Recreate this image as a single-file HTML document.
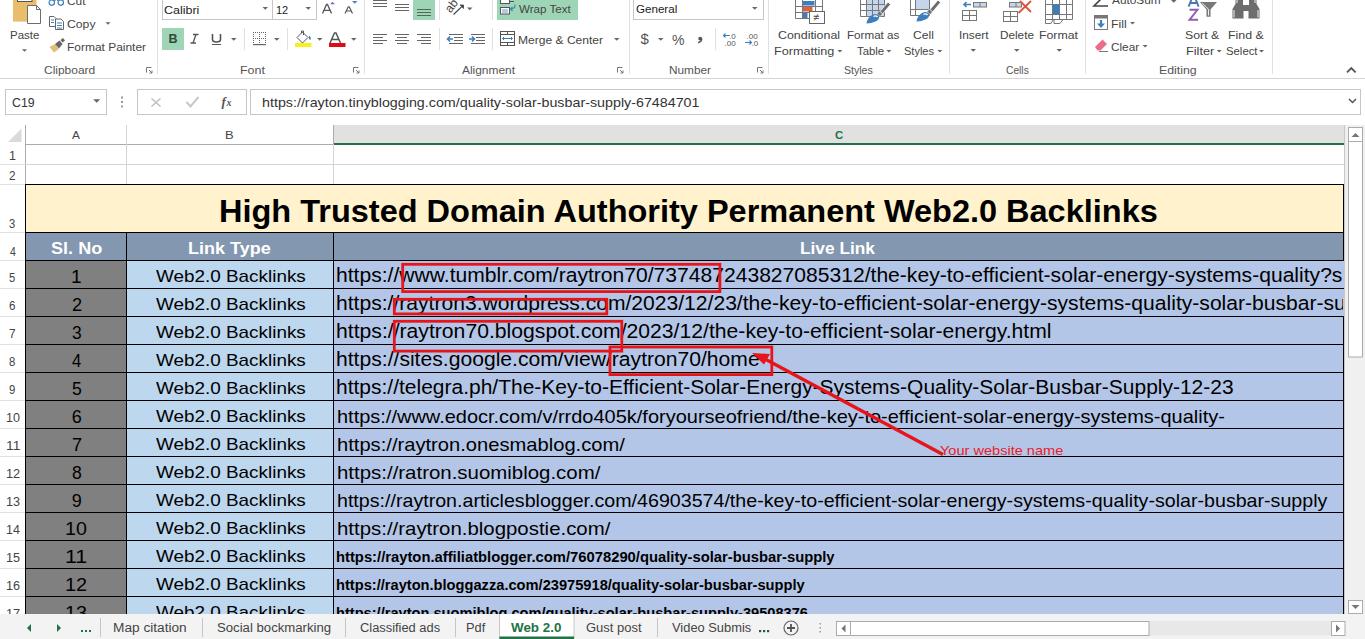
<!DOCTYPE html>
<html><head><meta charset="utf-8">
<style>
html,body{margin:0;padding:0;width:1365px;height:639px;overflow:hidden;background:#fff;font-family:"Liberation Sans",sans-serif;}
.t{position:absolute;white-space:nowrap;line-height:1;transform-origin:0 0;}
.r{position:absolute;}
#ribbon{position:absolute;left:0;top:0;width:1365px;height:79px;background:#fff;}
.div{position:absolute;top:0;width:1px;height:74px;background:#E1E1E1;}
.box{position:absolute;border:1px solid #C6C6C6;background:#fff;box-sizing:border-box;}
svg{position:absolute;overflow:visible;}
#cells{position:absolute;left:334px;top:260px;width:1009px;height:354px;overflow:hidden;}
</style></head><body>
<div id="ribbon">
  <div class="r" style="left:0;top:78px;width:1365px;height:1px;background:#D5D5D5"></div>
  <div class="div" style="left:157px"></div>
  <div class="div" style="left:364px"></div>
  <div class="div" style="left:629px"></div>
  <div class="div" style="left:768px"></div>
  <div class="div" style="left:949px"></div>
  <div class="div" style="left:1085px"></div>
  <div class="div" style="left:1272px"></div>
  <!-- font boxes -->
  <div class="box" style="left:162px;top:-2px;width:111px;height:22px"></div>
  <div class="box" style="left:272px;top:-2px;width:45px;height:22px"></div>
  <div class="r" style="left:162px;top:28px;width:22px;height:22px;background:#9FD5B7"></div>
  <div class="r" style="left:413px;top:0px;width:22px;height:20px;background:#9FD5B7"></div>
  <div class="r" style="left:497px;top:0px;width:81px;height:20px;background:#9FD5B7"></div>
  <div class="box" style="left:633px;top:-2px;width:131px;height:22px"></div>
<svg style="left:0;top:0" width="1365" height="79" viewBox="0 0 1365 79" shape-rendering="auto">
 <!-- Paste -->
 <rect x="13" y="-2" width="23.5" height="23.6" fill="#EABD6C"/>
 <rect x="17.5" y="-2" width="14.5" height="3.5" fill="#fff" stroke="#555" stroke-width="1"/>
 <path d="M27.5 5.5 H36.5 L40.5 9.5 V23.5 H27.5 Z" fill="#fff" stroke="#6d6d6d" stroke-width="1"/>
 <path d="M36.5 5.5 V9.5 H40.5" fill="none" stroke="#6d6d6d" stroke-width="1"/>
 <path d="M22 49.3 H27 L24.5 51.8 Z" fill="#666"/>
 <!-- Cut scissors -->
 <circle cx="51.8" cy="2.6" r="2.7" fill="none" stroke="#3D7EBF" stroke-width="1.2"/>
 <circle cx="60.8" cy="2.6" r="2.7" fill="none" stroke="#3D7EBF" stroke-width="1.2"/>
 <path d="M54.5 1 L56.3 -1 L58.1 1" fill="none" stroke="#555" stroke-width="1"/>
 <!-- Copy -->
 <path d="M49.5 16.5 H54 L56 18.5 V26.5 H49.5 Z" fill="#fff" stroke="#666" stroke-width="1"/>
 <path d="M51 20 H54 M51 22.5 H54" stroke="#3D7EBF" stroke-width="1"/>
 <path d="M55.5 19 H61 L63.5 21.5 V29.5 H55.5 Z" fill="#fff" stroke="#666" stroke-width="1"/>
 <path d="M57 23 H62 M57 25.5 H62 M57 28 H62" stroke="#3D7EBF" stroke-width="1"/>
 <!-- copy arrow -->
 <path d="M105.5 22.2 H110.5 L108 24.8 Z" fill="#666"/>
 <!-- Format painter -->
 <path d="M49.5 47 L55 44 L59 49 L54 52.5 Z" fill="#E3BE7B"/>
 <path d="M55 44 L59.5 40.5 L62.5 44 L59 48.5 Z" fill="#666"/>
 <path d="M60.5 40 L63 38 L65 40.5 L62.5 42.5 Z" fill="#666"/>
 <!-- dialog launchers -->
 <g stroke="#777" stroke-width="1" fill="none">
  <path d="M146.5 72.5 V67.5 H151.5"/><path d="M149 70 L152 73 M152 70.5 V73 H149.5"/>
  <path d="M353.5 72.5 V67.5 H358.5"/><path d="M356 70 L359 73 M359 70.5 V73 H356.5"/>
  <path d="M617.5 72.5 V67.5 H622.5"/><path d="M620 70 L623 73 M623 70.5 V73 H620.5"/>
  <path d="M757.5 72.5 V67.5 H762.5"/><path d="M760 70 L763 73 M763 70.5 V73 H760.5"/>
 </g>
 <!-- Font dropdown arrows -->
 <path d="M262.5 7 H268 L265.25 9.8 Z" fill="#666"/>
 <path d="M305.5 7 H311 L308.25 9.8 Z" fill="#666"/>
 <!-- grow / shrink font -->
 <path d="M322.5 13.5 L326.5 4.5 H327.5 L331.5 13.5 M324 10.3 H330" fill="none" stroke="#555" stroke-width="1.3"/>
 <path d="M330 4.3 L332.5 1.8 L335 4.3 Z" fill="#5B7FA6"/>
 <path d="M345 13.5 L348.3 6.8 H349.2 L352.5 13.5 M346.3 11 H351.2" fill="none" stroke="#555" stroke-width="1.2"/>
 <path d="M352 1 H357.5 L354.75 3.7 Z" fill="#5B7FA6"/>
 <!-- B I U -->
 <text x="168.6" y="43" font-family="Liberation Sans" font-weight="700" font-size="12.5" fill="#2D4A3B">B</text>
 <path d="M193 34.5 H198.5 M190.5 43 H196 M196 34.5 L193 43" fill="none" stroke="#555" stroke-width="1.3"/>
 <path d="M212.5 34 V39.5 Q212.5 42 216.5 42 Q220.5 42 220.5 39.5 V34" fill="none" stroke="#555" stroke-width="1.6"/>
 <path d="M212 44.5 H221" stroke="#555" stroke-width="1"/>
 <path d="M231 38 H236.5 L233.75 40.8 Z" fill="#666"/>
 <rect x="244" y="28" width="1" height="22" fill="#E1E1E1"/>
 <!-- borders icon -->
 <g fill="#666">
  <path d="M253 32 h1v1h-1z M255 32h1v1h-1z M257 32h1v1h-1z M259 32h1v1h-1z M261 32h1v1h-1z M263 32h1v1h-1z M265 32h1v1h-1z"/>
  <path d="M253 38 h1v1h-1z M255 38h1v1h-1z M257 38h1v1h-1z M259 38h1v1h-1z M261 38h1v1h-1z M263 38h1v1h-1z M265 38h1v1h-1z"/>
  <path d="M253 34h1v1h-1z M253 36h1v1h-1z M253 40h1v1h-1z M253 42h1v1h-1z M265 34h1v1h-1z M265 36h1v1h-1z M265 40h1v1h-1z M265 42h1v1h-1z M259 34h1v1h-1z M259 36h1v1h-1z M259 40h1v1h-1z M259 42h1v1h-1z"/>
  <rect x="253" y="44" width="13" height="1.2"/>
 </g>
 <path d="M274 38 H279.5 L276.75 40.8 Z" fill="#666"/>
 <rect x="287" y="28" width="1" height="22" fill="#E1E1E1"/>
 <!-- fill color -->
 <rect x="295" y="43" width="16.5" height="4" fill="#F5F01E"/>
 <path d="M302.5 32 L308 37.5 L302.5 43 L297 37.5 Z" fill="#fff" stroke="#555" stroke-width="1"/>
 <path d="M301.5 33 V31 H303.5 V35" fill="none" stroke="#555" stroke-width="1"/>
 <path d="M309 35.5 Q311.5 37 310.5 40 L309 39 Z" fill="#3D7EBF"/>
 <path d="M317 38 H322.5 L319.75 40.8 Z" fill="#666"/>
 <!-- font color -->
 <path d="M330 43 L334.5 33 H336 L340.5 43 M332 39.5 H338.5" fill="none" stroke="#555" stroke-width="1.5"/>
 <rect x="329" y="43" width="16.5" height="4" fill="#E00B17"/>
 <path d="M351 38 H356.5 L353.75 40.8 Z" fill="#666"/>
 <!-- alignment -->
 <g stroke="#666" stroke-width="1">
  <path d="M373 0.5 H387 M373 3.5 H387 M373 6.5 H387"/>
  <path d="M395 4.5 H409 M395 7.5 H409 M395 10.5 H409"/>
  <path d="M417 9.5 H431 M417 12.5 H431 M417 15.5 H431" stroke="#4E6B5A"/>
  <path d="M373 34.5 H387 M373 37.5 H383 M373 40.5 H387 M373 43.5 H383"/>
  <path d="M395 34.5 H409 M397 37.5 H407 M395 40.5 H409 M397 43.5 H407"/>
  <path d="M417 34.5 H431 M421 37.5 H431 M417 40.5 H431 M421 43.5 H431"/>
  <path d="M449 34.5 H463 M454 37.5 H463 M454 40.5 H463 M449 43.5 H463"/>
  <path d="M471 34.5 H485 M476 37.5 H485 M476 40.5 H485 M471 43.5 H485"/>
 </g>
 <path d="M453 39 H447.5 M450 36.5 L447.5 39 L450 41.5" fill="none" stroke="#3D7EBF" stroke-width="1.6"/>
 <path d="M469 39 H474.5 M472 36.5 L474.5 39 L472 41.5" fill="none" stroke="#3D7EBF" stroke-width="1.6"/>
 <rect x="439" y="0" width="1" height="20" fill="#E1E1E1"/>
 <rect x="439" y="28" width="1" height="22" fill="#E1E1E1"/>
 <rect x="492" y="0" width="1" height="20" fill="#E1E1E1"/>
 <rect x="492" y="28" width="1" height="22" fill="#E1E1E1"/>
 <!-- orientation -->
 <text transform="translate(450.5,13.5) rotate(-52)" font-family="Liberation Sans" font-size="12" fill="#444">ab</text>
 <path d="M453.5 14.5 L461.5 7" fill="none" stroke="#444" stroke-width="1.1"/><path d="M460 5 L463.5 5 L463.5 8.5 Z" fill="#444" stroke="#444" stroke-width="0.8"/>
 <path d="M467 7.5 H472.5 L469.75 10.3 Z" fill="#666"/>
 <!-- wrap text icon -->
 <rect x="500.5" y="-2" width="9" height="5.5" fill="#fff" stroke="#555" stroke-width="1"/>
 <path d="M509.5 1.5 H514" stroke="#555" stroke-width="1"/>
 <rect x="500.5" y="7.5" width="9" height="6.5" fill="#fff" stroke="#555" stroke-width="1"/>
 <path d="M502 10 H508 M502 12 H508" stroke="#3D7EBF" stroke-width="0.8"/>
 <path d="M515 4.5 Q515.5 9 510.5 9 M512.5 7 L510.5 9 L512.5 11" fill="none" stroke="#3D7EBF" stroke-width="1.1"/>
 <!-- merge icon -->
 <rect x="500.5" y="31.5" width="14" height="14" fill="#fff" stroke="#555" stroke-width="1"/>
 <path d="M500.5 34.5 H514.5 M500.5 42.5 H514.5 M507.5 31.5 V34.5 M507.5 42.5 V45.5" stroke="#555" stroke-width="1"/>
 <path d="M502.5 38.5 H512.5 M504 37 L502.5 38.5 L504 40 M511 37 L512.5 38.5 L511 40" fill="none" stroke="#3D7EBF" stroke-width="1"/>
 <path d="M614 38 H619.5 L616.75 40.8 Z" fill="#666"/>
 <!-- number dropdown -->
 <path d="M752 7 H757.5 L754.75 9.8 Z" fill="#666"/>
 <text x="640.5" y="44" font-family="Liberation Sans" font-size="15" fill="#555">$</text>
 <path d="M658 38 H663.5 L660.75 40.8 Z" fill="#666"/>
 <text x="672" y="44.5" font-family="Liberation Sans" font-size="14" fill="#555">%</text>
 <circle cx="700.2" cy="38.6" r="1.9" fill="#555"/><path d="M701.8 38.8 Q701.8 41.5 698.2 42.8" fill="none" stroke="#555" stroke-width="1.5"/>
 <rect x="715" y="28" width="1" height="22" fill="#E1E1E1"/>
 <text x="729" y="38.5" font-family="Liberation Sans" font-size="8" fill="#555">.0</text>
 <text x="724.5" y="45.5" font-family="Liberation Sans" font-size="8" fill="#555">.00</text>
 <path d="M730 35.5 H723.5 M725.5 33.5 L723.5 35.5 L725.5 37.5" fill="none" stroke="#3D7EBF" stroke-width="1.1"/>
 <text x="746.5" y="38.5" font-family="Liberation Sans" font-size="8" fill="#555">.00</text>
 <text x="751.5" y="45.5" font-family="Liberation Sans" font-size="8" fill="#555">.0</text>
 <path d="M745 42.5 H751.5 M749.5 40.5 L751.5 42.5 L749.5 44.5" fill="none" stroke="#3D7EBF" stroke-width="1.1"/>
 <!-- conditional formatting -->
 <g stroke="#777" stroke-width="1" fill="none">
  <path d="M795.5 -1 V18.5 H822.5 V-1 M795.5 6.5 H822.5 M795.5 12.5 H809 M802.5 -1 V18.5 M815.5 -1 V11"/>
 </g>
 <rect x="803" y="1" width="11.5" height="4.5" fill="#3D7EBF"/>
 <rect x="803" y="7" width="9.5" height="4.5" fill="#E0623A"/>
 <rect x="803" y="13" width="4.5" height="5" fill="#3D7EBF"/>
 <rect x="809.5" y="11.5" width="15" height="12" fill="#fff" stroke="#666" stroke-width="1"/>
 <text x="813" y="21" font-family="Liberation Sans" font-size="11" fill="#444">≠</text>
 <!-- format as table -->
 <rect x="866" y="-1" width="18.5" height="17" fill="#C5D6EA"/>
 <g stroke="#777" stroke-width="1" fill="none">
  <path d="M860.5 -1 V16.5 H884.5 V-1 M860.5 4.5 H884.5 M860.5 10.5 H884.5 M866.5 -1 V16.5 M872.5 -1 V16.5 M878.5 -1 V16.5"/>
 </g>
 <path d="M880 11.5 L888 2 L890.5 4.5 L882.5 14 Z" fill="#6d6d6d" stroke="#fff" stroke-width="0.8"/>
 <path d="M877 13.5 L879.5 11 L882.5 14 L880 16.5 Z" fill="#6d6d6d" stroke="#fff" stroke-width="0.6"/>
 <path d="M866.5 23.5 Q867.5 17 873 14.5 Q877 13 879 15.5 Q880 19.5 875.5 21.5 Q871.5 23.3 866.5 23.5 Z" fill="#3D7EBF"/>
 <path d="M873.5 16.5 Q876 15 877.5 17" stroke="#fff" stroke-width="1.3" fill="none"/>
 <!-- cell styles -->
 <rect x="915" y="-1" width="14.5" height="10.5" fill="#C5D6EA"/>
 <g stroke="#777" stroke-width="1" fill="none">
  <path d="M910.5 -1 V15.5 H929.5 V-1 M910.5 9.5 H929.5 M915.5 -1 V15.5"/>
 </g>
 <path d="M930 9.5 L938 0 L940.5 2.5 L932.5 12 Z" fill="#6d6d6d" stroke="#fff" stroke-width="0.8"/>
 <path d="M927 11.5 L929.5 9 L932.5 12 L930 14.5 Z" fill="#6d6d6d" stroke="#fff" stroke-width="0.6"/>
 <path d="M916.5 21.5 Q917.5 15 923 12.5 Q927 11 929 13.5 Q930 17.5 925.5 19.5 Q921.5 21.3 916.5 21.5 Z" fill="#3D7EBF"/>
 <path d="M923.5 14.5 Q926 13 927.5 15" stroke="#fff" stroke-width="1.3" fill="none"/>
 <!-- styles arrows -->
 <path d="M837.4 50 H842.4 L839.9 52.6 Z" fill="#666"/>
 <path d="M886.4 50 H891.4 L888.9 52.6 Z" fill="#666"/>
 <path d="M937.3 50 H942.3 L939.8 52.6 Z" fill="#666"/>
 <!-- insert -->
 <g stroke="#777" stroke-width="1" fill="none">
  <rect x="962.5" y="10.5" width="14" height="10"/><path d="M969.5 10.5 V20.5 M962.5 15.5 H976.5"/>
  <rect x="973.5" y="2.5" width="13" height="4.5" fill="#C5D6EA"/><path d="M980 2.5 V7"/>
  <rect x="1003.5" y="11.5" width="14" height="10"/><path d="M1010.5 11.5 V21.5 M1003.5 16.5 H1017.5"/>
  <rect x="1009.5" y="2.5" width="12" height="4.5" fill="#C5D6EA"/><path d="M1016 2.5 V7"/>
 </g>
 <path d="M971 4.5 H964 M966.5 2 L964 4.5 L966.5 7" fill="none" stroke="#3D7EBF" stroke-width="1.6"/>
 <path d="M1020 1 L1031 12 M1031 1 L1018.5 13" stroke="#E0523A" stroke-width="1.8"/>
 <!-- format cells icon -->
 <g stroke="#777" stroke-width="1" fill="none">
  <path d="M1045.5 -1 V19.5 H1072.5 V-1 M1045.5 4.5 H1072.5 M1045.5 14.5 H1072.5 M1052.5 -1 V19.5 M1059.5 -1 V19.5 M1066.5 -1 V19.5"/>
  <path d="M1045.5 19.5 V23.5 H1051 L1053 20 M1054 20 V23.5 H1060 L1063 19.5"/>
 </g>
 <rect x="1053" y="5" width="6.5" height="9" fill="#3D7EBF"/>
 <path d="M970.5 49 H976 L973.25 51.8 Z" fill="#666"/>
 <path d="M1014 49 H1019.5 L1016.75 51.8 Z" fill="#666"/>
 <path d="M1056.5 49 H1062 L1059.25 51.8 Z" fill="#666"/>
 <!-- editing -->
 <path d="M1108 6 H1094 L1101 -1" fill="none" stroke="#444" stroke-width="1.6"/>
 <path d="M1171 0 H1176.5 L1173.75 2.8 Z" fill="#666"/>
 <rect x="1094.5" y="15.5" width="13" height="14" fill="#fff" stroke="#777" stroke-width="1"/>
 <rect x="1094.5" y="15.5" width="13" height="3" fill="#777"/>
 <path d="M1101 20 V25" fill="none" stroke="#3D7EBF" stroke-width="2.2"/>
 <path d="M1097 23.5 L1101 28 L1105 23.5 Z" fill="#3D7EBF"/>
 <path d="M1130 22 H1135 L1132.5 24.6 Z" fill="#666"/>
 <path d="M1095 47 L1102.5 39.5 L1107 44 L1100.5 50.5 L1097.5 50.5 Z" fill="#E86F87"/>
 <path d="M1099 51.5 H1108" stroke="#777" stroke-width="1"/>
 <path d="M1142.6 45 H1147.6 L1145.1 47.6 Z" fill="#666"/>
 <!-- sort filter -->
 <path d="M1188.6 6.6 L1193.6 -6 L1198.6 6.6 M1190.2 3 H1197" fill="none" stroke="#4A78B0" stroke-width="1.9"/>
 <path d="M1189.5 9.8 H1197.5 L1189.5 19.8 H1198" fill="none" stroke="#8E5FB0" stroke-width="1.9"/>
 <path d="M1200 2 H1217 L1210.5 9.5 V16.8 H1206.5 V9.5 Z" fill="#777"/>
 <path d="M1202.5 3.3 L1208.5 9.3 V15.5" fill="none" stroke="#fff" stroke-width="0.9"/>
 <path d="M1216.7 50 H1221.7 L1219.2 52.6 Z" fill="#666"/>
 <!-- find binoculars -->
 <path d="M1232.5 18.5 V9 L1235.5 4 V-2 H1243 V5 H1249 V-2 H1256.5 V4 L1259.5 9 V18.5 H1248.5 V11 H1243.5 V18.5 Z" fill="#6d6d6d"/>
 <path d="M1234 17.5 V10 M1258 17.5 V10 M1237 3 V-2 M1255 3 V-2" stroke="#fff" stroke-width="0.9"/>
 <path d="M1259 50 H1264 L1261.5 52.6 Z" fill="#666"/>
 <!-- collapse caret -->
 <path d="M1347 72.3 L1351.3 68 L1355.6 72.3" fill="none" stroke="#555" stroke-width="1.9"/>
</svg>

</div>
<!-- formula bar -->
<div class="box" style="left:5px;top:89px;width:102px;height:26px"></div>
<div class="box" style="left:137px;top:89px;width:110px;height:26px"></div>
<div class="box" style="left:250px;top:89px;width:1111px;height:26px"></div>

<!-- headers -->
<div class="r" style="left:334px;top:125px;width:1010px;height:18px;background:#E1E1E1"></div>
<div class="r" style="left:25px;top:144px;width:309px;height:1px;background:#ABABAB"></div>
<div class="r" style="left:334px;top:143px;width:1010px;height:2px;background:#217346"></div>
<div class="r" style="left:25px;top:125px;width:1px;height:489px;background:#ABABAB"></div>
<div class="r" style="left:126px;top:125px;width:1px;height:19px;background:#D4D4D4"></div>
<div class="r" style="left:333px;top:125px;width:1px;height:19px;background:#ABABAB"></div>
<div class="r" style="left:1344px;top:125px;width:1px;height:489px;background:#C6C6C6"></div>

<div class="r" style="left:25px;top:184px;width:1319px;height:48px;background:#FFF2CC"></div>
<div class="r" style="left:25px;top:232px;width:1319px;height:28px;background:#8497B0"></div>
<div class="r" style="left:25px;top:260px;width:101px;height:354px;background:#808080"></div>
<div class="r" style="left:126px;top:260px;width:207px;height:354px;background:#BDD7EE"></div>
<div class="r" style="left:333px;top:260px;width:1011px;height:354px;background:#B4C6E7"></div>
<div class="r" style="left:25px;top:164px;width:1319px;height:1px;background:#D4D4D4"></div>
<div class="r" style="left:126px;top:144px;width:1px;height:40px;background:#D4D4D4"></div>
<div class="r" style="left:333px;top:144px;width:1px;height:40px;background:#D4D4D4"></div>
<div class="r" style="left:25px;top:184px;width:1319px;height:1px;background:#000"></div>
<div class="r" style="left:25px;top:232px;width:1319px;height:1px;background:#000"></div>
<div class="r" style="left:25px;top:260px;width:1319px;height:1px;background:#000"></div>
<div class="r" style="left:25px;top:288px;width:1319px;height:1px;background:#000"></div>
<div class="r" style="left:25px;top:316px;width:1319px;height:1px;background:#000"></div>
<div class="r" style="left:25px;top:344px;width:1319px;height:1px;background:#000"></div>
<div class="r" style="left:25px;top:372px;width:1319px;height:1px;background:#000"></div>
<div class="r" style="left:25px;top:400px;width:1319px;height:1px;background:#000"></div>
<div class="r" style="left:25px;top:428px;width:1319px;height:1px;background:#000"></div>
<div class="r" style="left:25px;top:456px;width:1319px;height:1px;background:#000"></div>
<div class="r" style="left:25px;top:484px;width:1319px;height:1px;background:#000"></div>
<div class="r" style="left:25px;top:512px;width:1319px;height:1px;background:#000"></div>
<div class="r" style="left:25px;top:540px;width:1319px;height:1px;background:#000"></div>
<div class="r" style="left:25px;top:568px;width:1319px;height:1px;background:#000"></div>
<div class="r" style="left:25px;top:596px;width:1319px;height:1px;background:#000"></div>
<div class="r" style="left:25px;top:184px;width:1px;height:430px;background:#000"></div>
<div class="r" style="left:126px;top:232px;width:1px;height:382px;background:#000"></div>
<div class="r" style="left:333px;top:232px;width:1px;height:382px;background:#000"></div>
<div class="r" style="left:1343px;top:184px;width:1px;height:76px;background:#000"></div>
<div class="r" style="left:1343px;top:316px;width:1px;height:298px;background:#000"></div>
<div class="r" style="left:0px;top:164px;width:25px;height:1px;background:#E1E1E1"></div>
<div class="r" style="left:0px;top:184px;width:25px;height:1px;background:#E1E1E1"></div>
<div class="r" style="left:0px;top:232px;width:25px;height:1px;background:#E1E1E1"></div>
<div class="r" style="left:0px;top:260px;width:25px;height:1px;background:#E1E1E1"></div>
<div class="r" style="left:0px;top:288px;width:25px;height:1px;background:#E1E1E1"></div>
<div class="r" style="left:0px;top:316px;width:25px;height:1px;background:#E1E1E1"></div>
<div class="r" style="left:0px;top:344px;width:25px;height:1px;background:#E1E1E1"></div>
<div class="r" style="left:0px;top:372px;width:25px;height:1px;background:#E1E1E1"></div>
<div class="r" style="left:0px;top:400px;width:25px;height:1px;background:#E1E1E1"></div>
<div class="r" style="left:0px;top:428px;width:25px;height:1px;background:#E1E1E1"></div>
<div class="r" style="left:0px;top:456px;width:25px;height:1px;background:#E1E1E1"></div>
<div class="r" style="left:0px;top:484px;width:25px;height:1px;background:#E1E1E1"></div>
<div class="r" style="left:0px;top:512px;width:25px;height:1px;background:#E1E1E1"></div>
<div class="r" style="left:0px;top:540px;width:25px;height:1px;background:#E1E1E1"></div>
<div class="r" style="left:0px;top:568px;width:25px;height:1px;background:#E1E1E1"></div>
<div class="r" style="left:0px;top:596px;width:25px;height:1px;background:#E1E1E1"></div>
<div id="cells">
<div class="t" style="left:2.26px;top:5.05px;font-size:20.5px;font-weight:400;color:#000;transform:scaleX(1.0286)">https://www.tumblr.com/raytron70/737487243827085312/the-key-to-efficient-solar-energy-systems-quality?source=share</div>
<div class="t" style="left:2.26px;top:33.05px;font-size:20.5px;font-weight:400;color:#000;transform:scaleX(1.0286)">https://raytron3.wordpress.com/2023/12/23/the-key-to-efficient-solar-energy-systems-quality-solar-busbar-supply/</div>
<div class="t" style="left:2.25px;top:61.05px;font-size:20.5px;font-weight:400;color:#000;transform:scaleX(1.0323)">https://raytron70.blogspot.com/2023/12/the-key-to-efficient-solar-energy.html</div>
<div class="t" style="left:2.26px;top:89.05px;font-size:20.5px;font-weight:400;color:#000;transform:scaleX(1.0300)">https://sites.google.com/view/raytron70/home</div>
<div class="t" style="left:2.27px;top:117.05px;font-size:20.5px;font-weight:400;color:#000;transform:scaleX(1.0236)">https://telegra.ph/The-Key-to-Efficient-Solar-Energy-Systems-Quality-Solar-Busbar-Supply-12-23</div>
<div class="t" style="left:2.63px;top:146.52px;font-size:19px;font-weight:400;color:#000;transform:scaleX(1.0515)">https://www.edocr.com/v/rrdo405k/foryourseofriend/the-key-to-efficient-solar-energy-systems-quality-</div>
<div class="t" style="left:2.62px;top:174.52px;font-size:19px;font-weight:400;color:#000;transform:scaleX(1.0606)">https://raytron.onesmablog.com/</div>
<div class="t" style="left:2.60px;top:202.52px;font-size:19px;font-weight:400;color:#000;transform:scaleX(1.0750)">https://ratron.suomiblog.com/</div>
<div class="t" style="left:2.66px;top:230.52px;font-size:19px;font-weight:400;color:#000;transform:scaleX(1.0332)">https://raytron.articlesblogger.com/46903574/the-key-to-efficient-solar-energy-systems-quality-solar-busbar-supply</div>
<div class="t" style="left:2.60px;top:258.52px;font-size:19px;font-weight:400;color:#000;transform:scaleX(1.0741)">https://raytron.blogpostie.com/</div>
<div class="t" style="left:1.98px;top:290.23px;font-size:14.5px;font-weight:700;color:#000;transform:scaleX(1.0194)">https://rayton.affiliatblogger.com/76078290/quality-solar-busbar-supply</div>
<div class="t" style="left:1.99px;top:318.23px;font-size:14.5px;font-weight:700;color:#000;transform:scaleX(1.0098)">https://rayton.bloggazza.com/23975918/quality-solar-busbar-supply</div>
<div class="t" style="left:1.99px;top:346.23px;font-size:14.5px;font-weight:700;color:#000;transform:scaleX(1.0082)">https://rayton.suomiblog.com/quality-solar-busbar-supply-39508376</div>
</div>

<div class="t" style="left:67.48px;top:-3.93px;font-size:11.5px;font-weight:400;color:#444;transform:scaleX(1.0344)">Cut</div>
<div class="t" style="left:67.47px;top:18.57px;font-size:11.5px;font-weight:400;color:#444;transform:scaleX(1.0607)">Copy</div>
<div class="t" style="left:67.06px;top:42.07px;font-size:11.5px;font-weight:400;color:#444;transform:scaleX(1.0397)">Format Painter</div>
<div class="t" style="left:10.10px;top:30.07px;font-size:11.5px;font-weight:400;color:#444;transform:scaleX(0.9996)">Paste</div>
<div class="t" style="left:44.48px;top:64.77px;font-size:11.5px;font-weight:400;color:#555;transform:scaleX(1.0411)">Clipboard</div>
<div class="t" style="left:164.46px;top:4.57px;font-size:11.5px;font-weight:400;color:#222;transform:scaleX(1.0850)">Calibri</div>
<div class="t" style="left:276.23px;top:4.57px;font-size:11.5px;font-weight:400;color:#222;transform:scaleX(0.9569)">12</div>
<div class="t" style="left:240.02px;top:64.77px;font-size:11.5px;font-weight:400;color:#555;transform:scaleX(1.0852)">Font</div>
<div class="t" style="left:519.00px;top:4.07px;font-size:11.5px;font-weight:400;color:#444;transform:scaleX(1.0086)">Wrap Text</div>
<div class="t" style="left:518.06px;top:35.07px;font-size:11.5px;font-weight:400;color:#444;transform:scaleX(1.0481)">Merge &amp; Center</div>
<div class="t" style="left:462.00px;top:64.77px;font-size:11.5px;font-weight:400;color:#555;transform:scaleX(1.0363)">Alignment</div>
<div class="t" style="left:635.50px;top:4.07px;font-size:11.5px;font-weight:400;color:#222;transform:scaleX(1.0086)">General</div>
<div class="t" style="left:669.07px;top:64.77px;font-size:11.5px;font-weight:400;color:#555;transform:scaleX(1.0283)">Number</div>
<div class="t" style="left:778.06px;top:29.87px;font-size:11.5px;font-weight:400;color:#444;transform:scaleX(1.0785)">Conditional</div>
<div class="t" style="left:774.41px;top:45.77px;font-size:11.5px;font-weight:400;color:#444;transform:scaleX(1.0962)">Formatting</div>
<div class="t" style="left:846.69px;top:29.87px;font-size:11.5px;font-weight:400;color:#444;transform:scaleX(1.0117)">Format as</div>
<div class="t" style="left:856.70px;top:45.77px;font-size:11.5px;font-weight:400;color:#444;transform:scaleX(0.9889)">Table</div>
<div class="t" style="left:912.77px;top:29.87px;font-size:11.5px;font-weight:400;color:#444;transform:scaleX(1.0509)">Cell</div>
<div class="t" style="left:903.82px;top:45.77px;font-size:11.5px;font-weight:400;color:#444;transform:scaleX(0.9584)">Styles</div>
<div class="t" style="left:843.54px;top:64.77px;font-size:11.5px;font-weight:400;color:#555;transform:scaleX(0.9191)">Styles</div>
<div class="t" style="left:959.47px;top:29.57px;font-size:11.5px;font-weight:400;color:#444;transform:scaleX(1.0264)">Insert</div>
<div class="t" style="left:999.58px;top:29.57px;font-size:11.5px;font-weight:400;color:#444;transform:scaleX(1.0205)">Delete</div>
<div class="t" style="left:1039.04px;top:29.57px;font-size:11.5px;font-weight:400;color:#444;transform:scaleX(1.0697)">Format</div>
<div class="t" style="left:1005.55px;top:64.77px;font-size:11.5px;font-weight:400;color:#555;transform:scaleX(0.8903)">Cells</div>
<div class="t" style="left:1112.00px;top:-4.93px;font-size:11.5px;font-weight:400;color:#444;transform:scaleX(1.0295)">AutoSum</div>
<div class="t" style="left:1111.44px;top:19.07px;font-size:11.5px;font-weight:400;color:#444;transform:scaleX(1.0664)">Fill</div>
<div class="t" style="left:1111.49px;top:42.07px;font-size:11.5px;font-weight:400;color:#444;transform:scaleX(1.0242)">Clear</div>
<div class="t" style="left:1185.46px;top:29.87px;font-size:11.5px;font-weight:400;color:#444;transform:scaleX(1.0708)">Sort &amp;</div>
<div class="t" style="left:1185.51px;top:45.77px;font-size:11.5px;font-weight:400;color:#444;transform:scaleX(1.1050)">Filter</div>
<div class="t" style="left:1227.63px;top:29.87px;font-size:11.5px;font-weight:400;color:#444;transform:scaleX(1.0788)">Find &amp;</div>
<div class="t" style="left:1225.51px;top:45.77px;font-size:11.5px;font-weight:400;color:#444;transform:scaleX(0.9852)">Select</div>
<div class="t" style="left:1159.03px;top:64.77px;font-size:11.5px;font-weight:400;color:#555;transform:scaleX(1.0725)">Editing</div>
<div class="t" style="left:11.88px;top:97.14px;font-size:12px;font-weight:400;color:#333;transform:scaleX(1.0268)">C19</div>
<div class="t" style="left:261.65px;top:95.97px;font-size:13.5px;font-weight:400;color:#333;transform:scaleX(1.0581)">https://rayton.tinyblogging.com/quality-solar-busbar-supply-67484701</div>
<div class="t" style="left:71.50px;top:129.57px;font-size:11.5px;font-weight:400;color:#444;transform:scaleX(1.0390)">A</div>
<div class="t" style="left:224.98px;top:129.57px;font-size:11.5px;font-weight:400;color:#444;transform:scaleX(1.1290)">B</div>
<div class="t" style="left:835.31px;top:129.57px;font-size:11.5px;font-weight:700;color:#217346;transform:scaleX(0.9868)">C</div>
<div class="t" style="left:8.87px;top:150.24px;font-size:12px;font-weight:400;color:#444;transform:scaleX(1.0385)">1</div>
<div class="t" style="left:9.21px;top:170.24px;font-size:12px;font-weight:400;color:#444;transform:scaleX(0.9818)">2</div>
<div class="t" style="left:9.43px;top:218.24px;font-size:12px;font-weight:400;color:#444;transform:scaleX(0.9310)">3</div>
<div class="t" style="left:9.63px;top:246.24px;font-size:12px;font-weight:400;color:#444;transform:scaleX(0.8710)">4</div>
<div class="t" style="left:9.43px;top:272.04px;font-size:12px;font-weight:400;color:#444;transform:scaleX(0.9310)">5</div>
<div class="t" style="left:9.22px;top:300.04px;font-size:12px;font-weight:400;color:#444;transform:scaleX(0.9643)">6</div>
<div class="t" style="left:9.21px;top:328.04px;font-size:12px;font-weight:400;color:#444;transform:scaleX(0.9818)">7</div>
<div class="t" style="left:9.33px;top:356.04px;font-size:12px;font-weight:400;color:#444;transform:scaleX(0.9474)">8</div>
<div class="t" style="left:9.33px;top:384.04px;font-size:12px;font-weight:400;color:#444;transform:scaleX(0.9474)">9</div>
<div class="t" style="left:6.06px;top:412.04px;font-size:12px;font-weight:400;color:#444;transform:scaleX(1.0436)">10</div>
<div class="t" style="left:5.97px;top:440.04px;font-size:12px;font-weight:400;color:#444;transform:scaleX(1.1472)">11</div>
<div class="t" style="left:6.04px;top:468.04px;font-size:12px;font-weight:400;color:#444;transform:scaleX(1.0612)">12</div>
<div class="t" style="left:6.05px;top:496.04px;font-size:12px;font-weight:400;color:#444;transform:scaleX(1.0523)">13</div>
<div class="t" style="left:6.07px;top:524.04px;font-size:12px;font-weight:400;color:#444;transform:scaleX(1.0350)">14</div>
<div class="t" style="left:6.05px;top:552.04px;font-size:12px;font-weight:400;color:#444;transform:scaleX(1.0523)">15</div>
<div class="t" style="left:6.05px;top:580.04px;font-size:12px;font-weight:400;color:#444;transform:scaleX(1.0523)">16</div>
<div class="t" style="left:6.04px;top:608.04px;font-size:12px;font-weight:400;color:#444;transform:scaleX(1.0612)">17</div>
<div class="t" style="left:219.37px;top:194.71px;font-size:32px;font-weight:700;color:#000;transform:scaleX(1.0153)">High Trusted Domain Authority Permanent Web2.0 Backlinks</div>
<div class="t" style="left:51.07px;top:240.41px;font-size:17px;font-weight:700;color:#fff;transform:scaleX(1.0639)">Sl. No</div>
<div class="t" style="left:188.33px;top:240.41px;font-size:17px;font-weight:700;color:#fff;transform:scaleX(1.0598)">Link Type</div>
<div class="t" style="left:800.28px;top:240.41px;font-size:17px;font-weight:700;color:#fff;transform:scaleX(1.0175)">Live Link</div>
<div class="t" style="left:71.22px;top:267.56px;font-size:18px;font-weight:400;color:#000;transform:scaleX(1.0633)">1</div>
<div class="t" style="left:156.20px;top:268.11px;font-size:17px;font-weight:400;color:#000;transform:scaleX(1.1110)">Web2.0 Backlinks</div>
<div class="t" style="left:71.69px;top:295.56px;font-size:18px;font-weight:400;color:#000;transform:scaleX(1.0120)">2</div>
<div class="t" style="left:156.20px;top:296.11px;font-size:17px;font-weight:400;color:#000;transform:scaleX(1.1110)">Web2.0 Backlinks</div>
<div class="t" style="left:72.02px;top:323.56px;font-size:18px;font-weight:400;color:#000;transform:scaleX(0.9655)">3</div>
<div class="t" style="left:156.20px;top:324.11px;font-size:17px;font-weight:400;color:#000;transform:scaleX(1.1110)">Web2.0 Backlinks</div>
<div class="t" style="left:72.23px;top:351.56px;font-size:18px;font-weight:400;color:#000;transform:scaleX(0.9231)">4</div>
<div class="t" style="left:156.20px;top:352.11px;font-size:17px;font-weight:400;color:#000;transform:scaleX(1.1110)">Web2.0 Backlinks</div>
<div class="t" style="left:71.92px;top:379.56px;font-size:18px;font-weight:400;color:#000;transform:scaleX(0.9767)">5</div>
<div class="t" style="left:156.20px;top:380.11px;font-size:17px;font-weight:400;color:#000;transform:scaleX(1.1110)">Web2.0 Backlinks</div>
<div class="t" style="left:71.70px;top:407.56px;font-size:18px;font-weight:400;color:#000;transform:scaleX(1.0000)">6</div>
<div class="t" style="left:156.20px;top:408.11px;font-size:17px;font-weight:400;color:#000;transform:scaleX(1.1110)">Web2.0 Backlinks</div>
<div class="t" style="left:71.69px;top:435.56px;font-size:18px;font-weight:400;color:#000;transform:scaleX(1.0120)">7</div>
<div class="t" style="left:156.20px;top:436.11px;font-size:17px;font-weight:400;color:#000;transform:scaleX(1.1110)">Web2.0 Backlinks</div>
<div class="t" style="left:71.92px;top:463.56px;font-size:18px;font-weight:400;color:#000;transform:scaleX(0.9767)">8</div>
<div class="t" style="left:156.20px;top:464.11px;font-size:17px;font-weight:400;color:#000;transform:scaleX(1.1110)">Web2.0 Backlinks</div>
<div class="t" style="left:71.80px;top:491.56px;font-size:18px;font-weight:400;color:#000;transform:scaleX(1.0000)">9</div>
<div class="t" style="left:156.20px;top:492.11px;font-size:17px;font-weight:400;color:#000;transform:scaleX(1.1110)">Web2.0 Backlinks</div>
<div class="t" style="left:64.98px;top:519.56px;font-size:18px;font-weight:400;color:#000;transform:scaleX(1.0933)">10</div>
<div class="t" style="left:156.20px;top:520.11px;font-size:17px;font-weight:400;color:#000;transform:scaleX(1.1110)">Web2.0 Backlinks</div>
<div class="t" style="left:64.85px;top:547.56px;font-size:18px;font-weight:400;color:#000;transform:scaleX(1.1946)">11</div>
<div class="t" style="left:156.20px;top:548.11px;font-size:17px;font-weight:400;color:#000;transform:scaleX(1.1110)">Web2.0 Backlinks</div>
<div class="t" style="left:64.96px;top:575.56px;font-size:18px;font-weight:400;color:#000;transform:scaleX(1.1055)">12</div>
<div class="t" style="left:156.20px;top:576.11px;font-size:17px;font-weight:400;color:#000;transform:scaleX(1.1110)">Web2.0 Backlinks</div>
<div class="t" style="left:64.97px;top:603.56px;font-size:18px;font-weight:400;color:#000;transform:scaleX(1.0993)">13</div>
<div class="t" style="left:156.20px;top:604.11px;font-size:17px;font-weight:400;color:#000;transform:scaleX(1.1110)">Web2.0 Backlinks</div>
<div class="t" style="left:939.78px;top:443.80px;font-size:13px;font-weight:400;color:#E8202A;transform:scaleX(1.1193)">Your website name</div>
<svg style="left:0;top:0" width="1365" height="639" viewBox="0 0 1365 639">
 <g fill="none" stroke="#E8141C" stroke-width="2.8">
  <rect x="402.7" y="264.3" width="317.2" height="27.3"/>
  <rect x="394.3" y="299.3" width="212.5" height="14.6"/>
  <rect x="394.3" y="321.3" width="227.5" height="29.8"/>
  <rect x="610" y="347" width="161.8" height="27.6"/>
 </g>
 <path d="M943 454.5 L765 359" stroke="#E8141C" stroke-width="3.4" fill="none"/>
 <path d="M752 353 L770 354 L764 364.5 Z" fill="#E8141C"/>
</svg>

<!-- tab bar -->
<div class="r" style="left:0;top:614px;width:1365px;height:25px;background:#F3F3F3"></div>
<!-- select all triangle -->
<svg style="left:0;top:0" width="1365" height="639" viewBox="0 0 1365 639">
 <path d="M8 142 L21.5 142 L21.5 128.5 Z" fill="#DADADA"/>

 <!-- formula bar icons -->
 <path d="M93.2 99.2 H100.2 L96.7 102.8 Z" fill="#666"/>
 <rect x="121" y="96.5" width="2" height="2" fill="#999"/>
 <rect x="121" y="101" width="2" height="2" fill="#999"/>
 <rect x="121" y="105.5" width="2" height="2" fill="#999"/>
 <path d="M151.5 98.5 L160.5 106.5 M160.5 98.5 L151.5 106.5" stroke="#BDBDBD" stroke-width="1.4"/>
 <path d="M186.5 102 L190.5 106.5 L198.5 97" fill="none" stroke="#C8C8C8" stroke-width="2"/>
 <text x="221.5" y="105.5" font-family="Liberation Serif" font-style="italic" font-weight="700" font-size="13" fill="#555">f</text>
 <text x="226.5" y="105.5" font-family="Liberation Serif" font-style="italic" font-weight="700" font-size="10" fill="#555">x</text>
 <!-- formula expand -->
 <path d="M1349 99 L1352.5 102.5 L1356 99" fill="none" stroke="#555" stroke-width="1.5"/>
 <!-- vertical scrollbar -->
 <rect x="1345" y="125" width="20" height="489" fill="#F0F0F0"/>
 <rect x="1348.5" y="127.5" width="14" height="14" fill="#fff" stroke="#ABABAB" stroke-width="1"/>
 <path d="M1351.5 137 H1359.5 L1355.5 133 Z" fill="#777"/>
 <rect x="1348.5" y="141.5" width="14" height="215.5" fill="#fff" stroke="#ABABAB" stroke-width="1"/>
 <rect x="1348.5" y="600.5" width="14" height="13" fill="#fff" stroke="#ABABAB" stroke-width="1"/>
 <path d="M1351.5 605 H1359.5 L1355.5 609 Z" fill="#777"/>
 <!-- tab bar -->
 <path d="M31 624 V632 L27 628 Z" fill="#217346"/>
 <path d="M57 624 V632 L61 628 Z" fill="#217346"/>
 <rect x="81" y="630" width="2" height="2" fill="#217346"/>
 <rect x="85" y="630" width="2" height="2" fill="#217346"/>
 <rect x="89" y="630" width="2" height="2" fill="#217346"/>
 <g fill="#C6C6C6">
  <rect x="100" y="618" width="1" height="19"/>
  <rect x="202" y="618" width="1" height="19"/>
  <rect x="345" y="618" width="1" height="19"/>
  <rect x="455" y="618" width="1" height="19"/>
  <rect x="657" y="618" width="1" height="19"/>
 </g>
 <!-- active tab -->
 <rect x="499.5" y="614" width="74.5" height="25" fill="#fff"/>
 <path d="M499.5 614 V639 M574 614 V639" stroke="#C6C6C6" stroke-width="1"/>
 <rect x="499.5" y="636.5" width="74.5" height="2.5" fill="#217346"/>
 <rect x="759" y="630" width="2.2" height="2.2" fill="#1E5C3A"/>
 <rect x="763" y="630" width="2.2" height="2.2" fill="#1E5C3A"/>
 <rect x="767" y="630" width="2.2" height="2.2" fill="#1E5C3A"/>
 <circle cx="791" cy="628" r="7" fill="none" stroke="#666" stroke-width="1.2"/>
 <path d="M791 624 V632 M787 628 H795" stroke="#555" stroke-width="1.8"/>
 <rect x="819.5" y="623" width="1.5" height="1.5" fill="#999"/>
 <rect x="819.5" y="627" width="1.5" height="1.5" fill="#999"/>
 <rect x="819.5" y="631" width="1.5" height="1.5" fill="#999"/>
 <!-- horizontal scrollbar -->
 <rect x="836" y="621" width="509" height="14.5" fill="#E8E8E8"/>
 <rect x="836.5" y="621.5" width="14" height="14" fill="#fff" stroke="#ABABAB" stroke-width="1"/>
 <path d="M845.5 624.5 V632.5 L841.5 628.5 Z" fill="#777"/>
 <rect x="850.5" y="621.5" width="298.5" height="14" fill="#fff" stroke="#ABABAB" stroke-width="1"/>
 <rect x="1331.5" y="621.5" width="13.5" height="14" fill="#fff" stroke="#ABABAB" stroke-width="1"/>
 <path d="M1336 624.5 V632.5 L1340 628.5 Z" fill="#777"/>
</svg>

<div class="t" style="left:113.27px;top:622.44px;font-size:12px;font-weight:400;color:#444;transform:scaleX(1.1392)">Map citation</div>
<div class="t" style="left:216.65px;top:622.44px;font-size:12px;font-weight:400;color:#444;transform:scaleX(1.0966)">Social bockmarking</div>
<div class="t" style="left:359.86px;top:622.44px;font-size:12px;font-weight:400;color:#444;transform:scaleX(1.0719)">Classified ads</div>
<div class="t" style="left:466.34px;top:622.44px;font-size:12px;font-weight:400;color:#444;transform:scaleX(1.0653)">Pdf</div>
<div class="t" style="left:511.20px;top:622.44px;font-size:12px;font-weight:700;color:#217346;transform:scaleX(1.1152)">Web 2.0</div>
<div class="t" style="left:586.15px;top:622.44px;font-size:12px;font-weight:400;color:#444;transform:scaleX(1.0843)">Gust post</div>
<div class="t" style="left:671.60px;top:622.44px;font-size:12px;font-weight:400;color:#444;transform:scaleX(1.0732)">Video Submis</div>

</body></html>
